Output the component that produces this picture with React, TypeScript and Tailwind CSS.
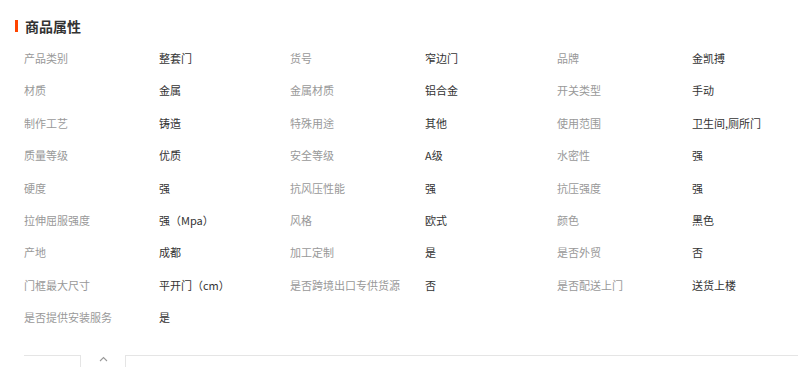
const rows: [string, string][] = [
  ["产品类别", "整套门"],
  ["货号", "窄边门"],
  ["品牌", "金凯搏"],
  ["材质", "金属"],
  ["金属材质", "铝合金"],
  ["开关类型", "手动"],
  ["制作工艺", "铸造"],
  ["特殊用途", "其他"],
  ["使用范围", "卫生间,厕所门"],
  ["质量等级", "优质"],
  ["安全等级", "A级"],
  ["水密性", "强"],
  ["硬度", "强"],
  ["抗风压性能", "强"],
  ["抗压强度", "强"],
  ["拉伸屈服强度", "强（Mpa）"],
  ["风格", "欧式"],
  ["颜色", "黑色"],
  ["产地", "成都"],
  ["加工定制", "是"],
  ["是否外贸", "否"],
  ["门框最大尺寸", "平开门（cm）"],
  ["是否跨境出口专供货源", "否"],
  ["是否配送上门", "送货上楼"],
  ["是否提供安装服务", "是"],
]

export default function App() {
  return (
    <div
      className="w-[798px] h-[367px] overflow-hidden bg-white"
      style={{ fontFamily: '"Noto Sans CJK SC", "Liberation Sans", sans-serif' }}
    >
      {/* title */}
      <div className="flex items-center pt-[18px] pl-[15px] h-[34px]">
        <span className="w-[3px] h-[12px] bg-[#ff4400]" />
        <h2 className="ml-[7px] text-[14px] leading-[16px] font-bold text-[#333]">商品属性</h2>
      </div>

      {/* attribute grid */}
      <div className="mt-[8px] pl-[24px] grid grid-cols-[135px_131px_135px_132px_135px_1fr] auto-rows-[32.4px] text-[11px]">
        {rows.map(([k, v]) => (
          <div key={k} className="contents">
            <div className="flex items-center text-[#999]">{k}</div>
            <div className="flex items-center text-[#333]">{v}</div>
          </div>
        ))}
      </div>

      {/* collapse bar */}
      <div className="mt-[21px] pl-[24px] flex h-[14px]">
        <div className="w-[57px] border-t border-r border-[#e5e5e5]" />
        <div className="w-[44px] flex justify-center">
          <svg width="9" height="6" viewBox="0 0 9 6" className="mt-[1px]">
            <path d="M1 5 L4.5 1.5 L8 5" fill="none" stroke="#999" strokeWidth="1.1" />
          </svg>
        </div>
        <div className="flex-1 border-t border-l border-[#e5e5e5]" />
      </div>
    </div>
  )
}
